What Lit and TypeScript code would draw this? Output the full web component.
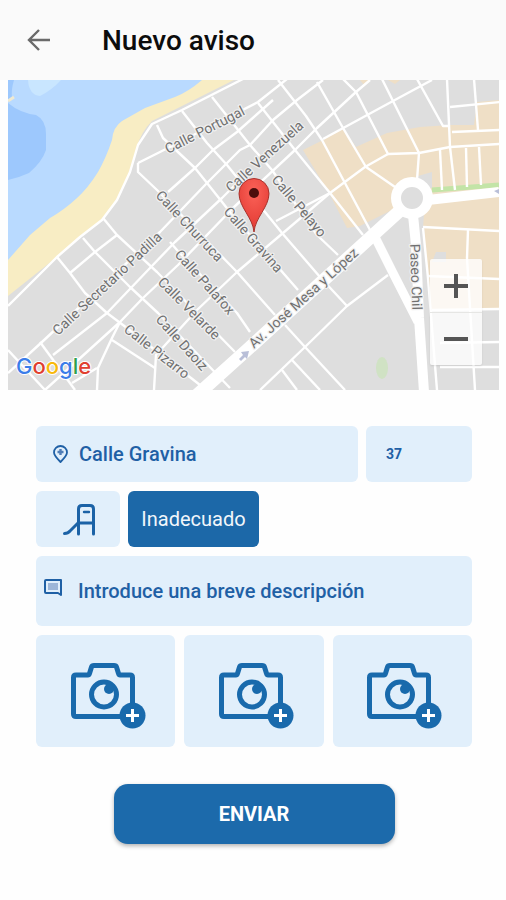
import { LitElement, html, css, svg } from "lit";
import { customElement } from "lit/decorators.js";

// Thin streets of the map, as polylines in map coordinates.
const STREETS = [
  "278,80 306,116 322,140 370,230",
  "317,82 343,128 366,167 395,187",
  "343,79 356,92 388,154 419,153 450,147 500,144",
  "382,79 393,101 419,153 417,180",
  "417,79 443,126 449,126",
  "447,79 450,147 455,190",
  "474,79 478,130",
  "450,107 500,102",
  "452,132 500,130",
  "432,80 393,101 323,139",
  "370,80 356,92 317,128 295,150 233,208 178,265 143,298 120,322 45,390",
  "323,80 297,100 273,120 250,145 240,150 207,183 160,232 42,342 8,373",
  "138,163 160,152 225,119 258,102 287,79",
  "258,103 295,150 330,193 363,235",
  "212,97 250,145 272,170 317,235 338,255",
  "182,111 207,143 227,165 282,233 320,277 347,306",
  "157,125 163,138 195,168 207,183 230,212 298,290",
  "138,163 138,172 157,190 237,272 275,315",
  "285,325 305,347 345,390",
  "103,218 117,235 157,272 235,352",
  "83,238 95,252 130,287 158,313 230,388",
  "57,257 70,273 85,293 107,313 123,325 200,385",
  "70,273 95,252 117,235",
  "170,242 177,250 237,313 250,332",
  "53,355 107,313 150,268 175,242 222,198 250,170",
  "168,192 195,168 213,150 237,132 273,100",
  "97,390 98,368 112,338 120,322",
  "112,340 155,368",
  "154,390 156,355 197,310 237,272 283,233",
  "276,221 330,193 365,167 388,154",
  "283,233 330,193",
  "8,350 45,390",
  "40,342 75,390",
  "72,383 97,368",
  "260,390 305,347 347,306 388,275",
  "282,370 297,390",
  "292,360 320,390",
  "423,228 428,278 437,390",
  "427,276 500,279",
  "468,230 467,258 475,390",
  "432,310 500,309",
  "440,343 500,342",
  "440,367 500,367",
  "423,227 500,231",
  "440,150 442,190",
  "466,148 467,187",
  "479,147 481,185",
];

// Street names: text, start of the baseline, angle in degrees.
const LABELS: [string, number, number, number][] = [
  ["Calle Portugal", 168, 154, -27],
  ["Calle Venezuela", 231, 193, -42],
  ["Calle Pelayo", 271, 180, 50],
  ["Calle Gravina", 223, 212, 49],
  ["Calle Churruca", 155, 196, 47],
  ["Calle Secretario Padilla", 58, 336, -43],
  ["Calle Palafox", 174, 255, 48],
  ["Calle Velarde", 157, 283, 45],
  ["Calle Daoiz", 155, 320, 48],
  ["Calle Pizarro", 123, 331, 38],
  ["Av. José Mesa y López", 254, 349, -42],
  ["Paseo Chil", 410, 244, 88],
];

@customElement("street-map")
class StreetMap extends LitElement {
  static styles = css`
    :host { display: block; position: relative; }
    .map { display: block; width: 100%; height: auto; }
    .street { fill: none; stroke: #fff; stroke-width: 2.4; stroke-linejoin: round; }
    .avenue { fill: none; stroke: #fff; stroke-linejoin: round; }
    .label {
      font: 400 14px Roboto, sans-serif; fill: #707070;
      stroke: #f0f0f0; stroke-width: 2.5; stroke-linejoin: round; paint-order: stroke;
    }
    .brand {
      font: 500 22px Inter, sans-serif;
      stroke: #fff; stroke-width: 2; stroke-linejoin: round; paint-order: stroke;
    }
    .blue { fill: #3b7de9; }
    .red { fill: #e0402f; }
    .yellow { fill: #f8b90c; }
    .green { fill: #2f9f4c; }
    .zoom {
      position: absolute; right: 17px; bottom: 25px; width: 52px;
      display: flex; flex-direction: column; border-radius: 2px;
      background: rgba(255, 255, 255, 0.78); box-shadow: 0 1px 2px rgba(0, 0, 0, 0.1);
    }
    .step {
      height: 53px; padding: 0; border: 0; background: none; cursor: pointer;
      display: flex; align-items: center; justify-content: center;
    }
    .step + .step { border-top: 1px solid #e6e6e4; }
    .sign { width: 24px; height: 24px; fill: #555; }
  `;

  render() {
    return html`
      <svg class="map" viewBox="8 80 491 310" role="img" aria-label="Mapa">
        <defs>
          <radialGradient id="pin" cx="50%" cy="25%" r="70%">
            <stop offset="0" stop-color="#fb6258" />
            <stop offset="1" stop-color="#e33b34" />
          </radialGradient>
        </defs>
        <rect x="8" y="80" width="491" height="310" fill="#dedede" />
        <path fill="#f8edc4" d="M8 80H234L182 106L152 121Q141 132 137 147L128 176Q120 196 105 217L82 235L57 257L8 296Z" />
        <path fill="#b9daff" d="M8 80H202Q188 92 175 97L145 108L122 121Q113 127 112 140Q106 158 98 172Q88 188 77 198Q64 210 50 218L30 235L8 260Z" />
        <path fill="#9dc8fd" d="M8 103Q20 113 36 115Q46 120 46 134V150Q42 162 29 173Q18 178 8 180ZM8 80H14Q11 90 12 98L8 100Z" />
        <path fill="#c9e6ff" d="M28 80Q29 95 40 96Q52 90 61 80Z" />
        <path fill="none" stroke="#f0ead2" stroke-width="3" d="M8 101L14 97" />
        <path fill="#efdfc6" d="M303 150L323 140L343 128L356 147L387 133L420 127L450 125H474L477 102L499 100V309H430L424 228L412 200L360 226L347 228L330 195ZM360 80H370L364 85ZM388 80H400L395 84Z" />
        <path fill="#dedede" d="M418 176L432 172V188H420ZM436 252H446V262H432ZM425 200L423 228L428 310H418L412 210Z" />
        <path fill="none" stroke="#c3e4a7" stroke-width="5" d="M432 190L499 185" />
        <ellipse cx="382" cy="368" rx="6" ry="11" fill="#d0e2c4" />
        <polyline class="street" points="243,79 182,110 152,124 138,145 130,172 117,200 102,220 80,237 57,257 8,306" />
        ${STREETS.map((points) => svg`<polyline class="street" points=${points} />`)}
        <g class="avenue">
          <path stroke-width="13" d="M197 395L247 350L372 236L405 206" />
          <path stroke-width="9" d="M374 235L393 273L418 322" />
          <path stroke-width="10" d="M412 205L416 245L419 318L424 392" />
          <path stroke-width="10" d="M428 200L499 192" />
        </g>
        <circle cx="412" cy="198" r="16" fill="#dedede" stroke="#fff" stroke-width="10" />
        <path fill="#b9bfd8" d="M239 359L243 355L241 352L249 351L247 359L245 357L241 361ZM494 191L499 189V194Z" />
        ${LABELS.map(
          ([name, x, y, angle]) => svg`
            <text class="label" transform="translate(${x} ${y}) rotate(${angle})">${name}</text>`,
        )}
        <path fill="url(#pin)" stroke="#a8322c" stroke-width="1" d="M254 232C253 218 239 207 239 193.500A15 15 0 0 1 269 193.500C269 207 255 218 254 232Z" />
        <circle cx="254" cy="193" r="5" fill="#4b0d0c" />
        <text class="brand" x="16" y="374"><tspan class="blue">G</tspan><tspan class="red">o</tspan><tspan class="yellow">o</tspan><tspan class="blue">g</tspan><tspan class="green">l</tspan><tspan class="red">e</tspan></text>
      </svg>
      <div class="zoom">
        <button class="step" type="button" aria-label="Acercar">
          <svg class="sign" viewBox="0 0 24 24"><path d="M0 10H10V0H14V10H24V14H14V24H10V14H0Z" /></svg>
        </button>
        <button class="step" type="button" aria-label="Alejar">
          <svg class="sign" viewBox="0 0 24 24"><path d="M0 10H24V14H0Z" /></svg>
        </button>
      </div>
    `;
  }
}

@customElement("app-root")
class AppRoot extends LitElement {
  static styles = css`
    * { box-sizing: border-box; }
    :host {
      display: block; min-height: 100vh; background: #fefefe;
      font-family: Roboto, sans-serif; color: #1f60a5;
    }
    button, input, textarea { font: inherit; color: inherit; border: 0; margin: 0; }
    button { cursor: pointer; padding: 0; }
    .bar {
      display: flex; align-items: center; gap: 50px; height: 80px; padding: 2px 26px 0;
      background: #fafafa;
    }
    .back { display: flex; background: none; }
    .arrow { width: 26px; height: 26px; fill: none; stroke: #6a6a6a; stroke-width: 2.4; }
    .title { margin: 0; font-size: 28px; line-height: 36px; font-weight: 500; color: #0c0c0c; }
    .place { margin: 0 7px 0 8px; }
    .form { display: flex; flex-direction: column; gap: 9px; padding: 36px 34px 32px 36px; }
    .row { display: flex; gap: 8px; }
    .box { background: #e1effb; border-radius: 6px; }
    .field { display: flex; align-items: center; height: 56px; }
    .street { flex: 1; gap: 8px; padding: 0 15px; min-width: 0; }
    .number { width: 106px; padding: 0 20px; }
    .input {
      flex: 1; min-width: 0; width: 100%; padding: 0; background: none; outline: none;
      font-size: 20px; line-height: 24px; font-weight: 500;
    }
    .small { font-size: 14px; line-height: 20px; font-weight: 700; }
    .glyph { width: 20px; height: 20px; flex: none; fill: none; stroke: currentColor; stroke-width: 2; }
    .kind { display: flex; align-items: center; justify-content: center; width: 84px; height: 56px; }
    .slide { width: 36px; height: 36px; fill: none; stroke: #1b62a6; stroke-width: 3; stroke-linecap: round; stroke-linejoin: round; }
    .state {
      width: 131px; height: 56px; border-radius: 6px; background: #1c68a8; color: #f1f6fb;
      font-size: 20px; line-height: 24px;
    }
    .note { display: flex; align-items: flex-start; gap: 14px; height: 70px; padding: 23px 8px 0; }
    .area { height: 24px; resize: none; overflow: hidden; }
    .area::placeholder { color: inherit; opacity: 1; }
    .photos { display: grid; grid-template-columns: repeat(3, 1fr); gap: 9px; }
    .photo { display: flex; align-items: center; justify-content: center; height: 112px; }
    .camera { width: 80px; height: 80px; }
    .send {
      align-self: center; width: 281px; max-width: 100%; height: 60px; margin-top: 28px;
      border-radius: 14px; background: #1c6aab; color: #fff;
      font-size: 20px; line-height: 24px; font-weight: 700;
      box-shadow: 0 2px 4px rgba(0, 0, 0, 0.3);
    }
  `;

  private camera() {
    return html`
      <svg class="camera" viewBox="0 0 80 80" aria-hidden="true">
        <path fill="none" stroke="#196aac" stroke-width="5" stroke-linejoin="round"
          d="M10 24Q7.500 24 7.500 26.500V63Q7.500 65.500 10 65.500H64Q66.500 65.500 66.500 63V26.500Q66.500 24 64 24H54Q53 24 52.500 22.500L50.500 16Q50 14.500 48 14.500H28Q26 14.500 25.500 16L23.500 22.500Q23 24 22 24Z" />
        <circle cx="38" cy="43.500" r="12.500" fill="none" stroke="#196aac" stroke-width="5" />
        <circle cx="43" cy="38" r="5" fill="#196aac" />
        <circle cx="66.500" cy="64.500" r="13" fill="#196aac" />
        <path fill="none" stroke="#fff" stroke-width="3" d="M60 64.500H73M66.500 58V71" />
      </svg>
    `;
  }

  render() {
    return html`
      <header class="bar">
        <button class="back" type="button" aria-label="Volver">
          <svg class="arrow" viewBox="0 0 26 26"><path d="M24 12H4M13 2L3 12L13 22" /></svg>
        </button>
        <h1 class="title">Nuevo aviso</h1>
      </header>
      <street-map class="place"></street-map>
      <form class="form" @submit=${(event: Event) => event.preventDefault()}>
        <div class="row">
          <label class="box field street">
            <svg class="glyph" viewBox="0 0 20 20" aria-hidden="true">
              <path stroke-width="1.800" stroke-linejoin="round" d="M9.500 18C5 13.500 3 11 3 8.500A6.500 6.500 0 0 1 16 8.500C16 11 14 13.500 9.500 18Z" />
              <path stroke="#4f7db6" stroke-width="2.400" d="M6.500 8H12.500M9.500 5V11" />
            </svg>
            <input class="input" aria-label="Calle" .value=${"Calle Gravina"} />
          </label>
          <label class="box field number">
            <input class="input small" aria-label="Número" inputmode="numeric" .value=${"37"} />
          </label>
        </div>
        <div class="row">
          <button class="box kind" type="button" aria-label="Parque infantil">
            <svg class="slide" viewBox="0 0 36 36">
              <path d="M18.500 33V8Q18.500 4.500 22 4.500H30Q33.500 4.500 33.500 8V33M18.500 22H33.500" />
              <path stroke-width="2.400" d="M24 11H29" />
              <path d="M18 22L10 30Q8 32.500 4.500 32.500" />
            </svg>
          </button>
          <button class="state" type="button">Inadecuado</button>
        </div>
        <label class="box note">
          <svg class="glyph" viewBox="0 0 20 20" aria-hidden="true">
            <path stroke-linejoin="round" d="M2 1H17V16L14 14H2Q1 14 1 13V2Q1 1 2 1Z" />
            <path fill="#9db6d8" stroke="none" d="M4 4H14V11H4Z" />
          </svg>
          <textarea class="input area" rows="1" aria-label="Descripción" placeholder="Introduce una breve descripción"></textarea>
        </label>
        <div class="photos">
          ${[1, 2, 3].map(
            (n) => html`<button class="box photo" type="button" aria-label="Añadir foto ${n}">${this.camera()}</button>`,
          )}
        </div>
        <button class="send" type="submit">ENVIAR</button>
      </form>
    `;
  }
}
